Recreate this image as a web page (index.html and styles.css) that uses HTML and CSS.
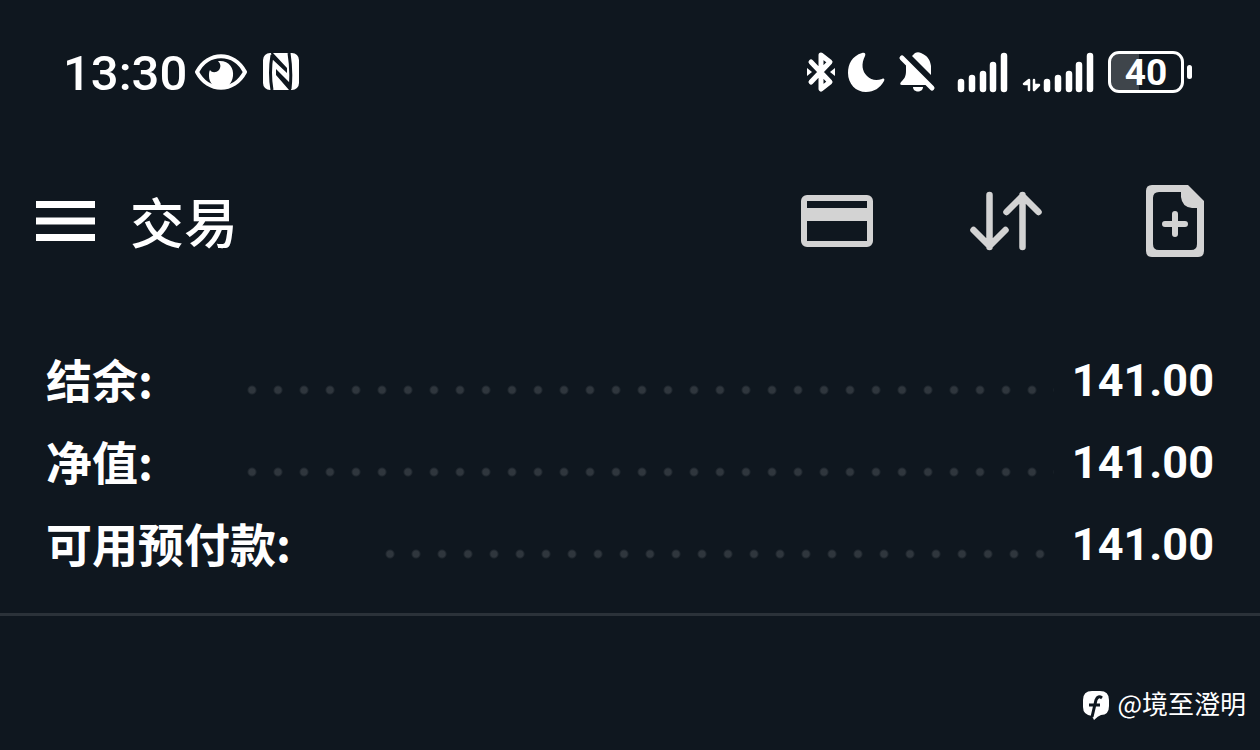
FILE: index.html
```html
<!DOCTYPE html>
<html lang="zh-CN">
<head>
  <meta charset="UTF-8">
  <meta name="viewport" content="width=device-width, initial-scale=1.0">
  <title>交易</title>
  <link rel="stylesheet" href="styles.css">
</head>
<body>
  <div class="screen">
    <!-- Status bar -->
    <div class="status-bar">
      <div class="status-left">
        <span class="clock">13:30</span>
        <svg class="eye" width="52" height="38" viewBox="0 0 52 38">
          <path d="M2 19C13-2 39-2 50 19C39 40 13 40 2 19Z" fill="none" stroke="#fff" stroke-width="4" stroke-linejoin="round"/>
          <path d="M23 8C34 7 39 15 38 23C37 31 32 35 26 35C19 35 14 30 14 23C14 20 14 19 15 17C17 20 21 20 24 17C26 14 26 11 23 8Z" fill="#fff"/>
        </svg>
        <svg width="36" height="38" viewBox="0 0 36 38">
          <rect y="0" width="36" height="37" rx="7" fill="#fff"/>
          <path d="M9 2Q6 20 9 37M26 0Q29 19 27 36" fill="none" stroke="#0f171f" stroke-width="3"/>
          <path d="M8 0H10L24 15V20L9 6ZM13 16L28 31V37H26L13 22Z" fill="#0f171f"/>
        </svg>
      </div>
      <div class="status-right">
        <svg width="28" height="42" viewBox="0 0 28 42">
          <path d="M4 11L23 31L14 38V4L23 11L4 31" fill="none" stroke="#fff" stroke-width="5" stroke-linecap="round" stroke-linejoin="round"/>
          <path d="M0 17L5 21L0 25ZM28 17L23 21L28 25Z" fill="#fff"/>
        </svg>
        <svg width="38" height="42" viewBox="0 0 38 42">
          <path d="M15 2C5 5 1 13 1 22C1 33 9 41 19 41C27 41 33 37 37 30C38 28 37 27 35 28C29 30 24 29 20 25C15 20 14 13 18 5C19 3 18 1 15 2Z" fill="#fff"/>
        </svg>
        <svg width="42" height="42" viewBox="0 0 42 42">
          <path d="M9 12V20C9 26 7 28 4 31Q2 34 5 34H30ZM15 5L18 2C20 1 22 1 24 2C31 5 33 9 34 15V24ZM16 36H26C26 42 16 42 16 36Z" fill="#fff"/>
          <path d="M5 7L35 37" stroke="#fff" stroke-width="5" stroke-linecap="round"/>
        </svg>
        <svg width="58" height="42" viewBox="0 0 58 42">
          <path d="M10 31V38M21 27V38M32 23V38M42 14V38M53 5V38" stroke="#fff" stroke-width="6.500" stroke-linecap="round"/>
        </svg>
        <svg width="75" height="42" viewBox="0 0 75 42">
          <path d="M26 31V38M37 27V38M48 23V38M58 14V38M69 5V38" stroke="#fff" stroke-width="6.500" stroke-linecap="round"/>
          <path d="M8 39V29L3 33H8M13 29V39L18 34H13" fill="#fff" stroke="#fff" stroke-width="2.500" stroke-linecap="round" stroke-linejoin="round"/>
        </svg>
        <div class="battery"><span class="battery-level">40</span></div>
      </div>
    </div>

    <!-- Header -->
    <header class="header">
      <button class="icon-button" aria-label="菜单">
        <svg width="60" height="40" viewBox="0 0 60 40">
          <path d="M0 3.500H59M0 20H59M0 36.500H59" stroke="#fff" stroke-width="7"/>
        </svg>
      </button>
      <h1 class="title">交易</h1>
      <div class="actions">
        <button class="icon-button" aria-label="存款">
          <svg width="72" height="72" viewBox="0 0 72 72">
            <rect x="3" y="13" width="66" height="46" rx="3" fill="none" stroke="#d3d3d3" stroke-width="6"/>
            <path d="M3 29.500H69" stroke="#d3d3d3" stroke-width="13"/>
          </svg>
        </button>
        <button class="icon-button" aria-label="排序">
          <svg width="72" height="72" viewBox="0 0 72 72">
            <path d="M19.500 10V62M3.500 45L19.500 61L35.500 45M52.500 62V10M36.500 27L52.500 11L68.500 27" fill="none" stroke="#d3d3d3" stroke-width="6.500" stroke-linecap="round" stroke-linejoin="round"/>
          </svg>
        </button>
        <button class="icon-button" aria-label="新订单">
          <svg width="72" height="72" viewBox="0 0 72 72">
            <path fill-rule="evenodd" d="M12 0H49L65 16V66Q65 72 59 72H13Q7 72 7 66V6Q7 0 13 0ZM20 7Q14 7 14 13V59Q14 65 20 65H52Q58 65 58 59V23H53Q43 22 42 12V7Z" fill="#d3d3d3"/>
            <path d="M36 29V49M26 39H46" stroke="#d3d3d3" stroke-width="6" stroke-linecap="round"/>
          </svg>
        </button>
      </div>
    </header>

    <!-- Account summary -->
    <dl class="summary">
      <div class="row">
        <dt>结余:</dt>
        <dd><span class="dots"></span><span class="value">141.00</span></dd>
      </div>
      <div class="row">
        <dt>净值:</dt>
        <dd><span class="dots"></span><span class="value">141.00</span></dd>
      </div>
      <div class="row">
        <dt>可用预付款:</dt>
        <dd><span class="dots"></span><span class="value">141.00</span></dd>
      </div>
    </dl>

    <footer class="watermark">
      <svg width="28" height="30" viewBox="0 0 28 30">
        <path d="M10 1H18Q27 1 27 10V16Q27 25 19 25Q16 26 12 30L10 26Q1 25 1 17V10Q1 1 10 1Z" fill="#fff"/>
        <path d="M20 8Q16 5 14 10L10 27M7 15H18" fill="none" stroke="#0f171f" stroke-width="3"/>
      </svg>
      <span>@境至澄明</span>
    </footer>
  </div>
</body>
</html>
```
FILE: styles.css
```css
html, body {
  margin: 0;
  padding: 0;
  height: 100%;
}

body {
  background-color: #0f171f;
  color: #fff;
  font-family: "Noto Sans CJK SC", sans-serif;
}

svg {
  display: block;
}

.screen {
  display: flex;
  flex-direction: column;
  min-height: 100vh;
  box-sizing: border-box;
  padding-top: 51px;
}

/* Status bar */
.status-bar {
  display: flex;
  justify-content: space-between;
  align-items: center;
  height: 42px;
  padding: 0 67px 0 63px;
}

.status-left,
.status-right {
  display: flex;
  align-items: center;
}

.status-right {
  gap: 12px;
}

.clock,
.battery-level,
.value {
  font-family: Roboto, sans-serif;
}

.clock {
  padding-top: 3px;
  font-size: 49px;
  line-height: 42px;
  font-weight: 500;
}

.eye {
  margin: 0 16px 0 8px;
}

.battery {
  position: relative;
  box-sizing: border-box;
  width: 76px;
  height: 42px;
  margin-right: 9px;
  border: 3px solid #fff;
  border-radius: 11px;
  background: linear-gradient(to right, #3f454b 40%, transparent 40%);
  text-align: center;
}

.battery::after {
  content: "";
  position: absolute;
  top: 11px;
  right: -11px;
  width: 5px;
  height: 14px;
  border-radius: 3px;
  background: #fff;
}

.battery-level {
  display: block;
  font-size: 37px;
  line-height: 38px;
  font-weight: 700;
}

/* Header */
.header {
  display: flex;
  align-items: center;
  padding: 92px 49px 83px 36px;
}

.icon-button {
  padding: 0;
  border: none;
  background: none;
  cursor: pointer;
}

.title {
  margin: 0 0 0 34px;
  font-size: 54px;
  line-height: 72px;
  font-weight: 500;
}

.actions {
  display: flex;
  gap: 97px;
  margin-left: auto;
}

/* Account summary */
.summary {
  margin: 0;
  padding: 0 46px 27px;
  border-bottom: 3px solid #2b3239;
}

.row {
  display: flex;
  height: 82px;
  font-size: 46px;
  line-height: 82px;
  font-weight: 700;
}

.row dt {
  line-height: 76px;
}

.row dd {
  display: flex;
  flex: 1;
  align-items: center;
  margin: 0 0 0 86px;
}

.dots {
  flex: 1;
  height: 10px;
  margin: 18px 18px 0 0;
  background: radial-gradient(circle, #2f363d 3px, transparent 5px) 0 0 / 26px 10px repeat-x;
}

.value {
  font-size: 45px;
}

/* Watermark */
.watermark {
  display: flex;
  justify-content: flex-end;
  gap: 7px;
  margin-top: auto;
  padding: 0 14px 30px 0;
  font-size: 26px;
  line-height: 26px;
}
```
